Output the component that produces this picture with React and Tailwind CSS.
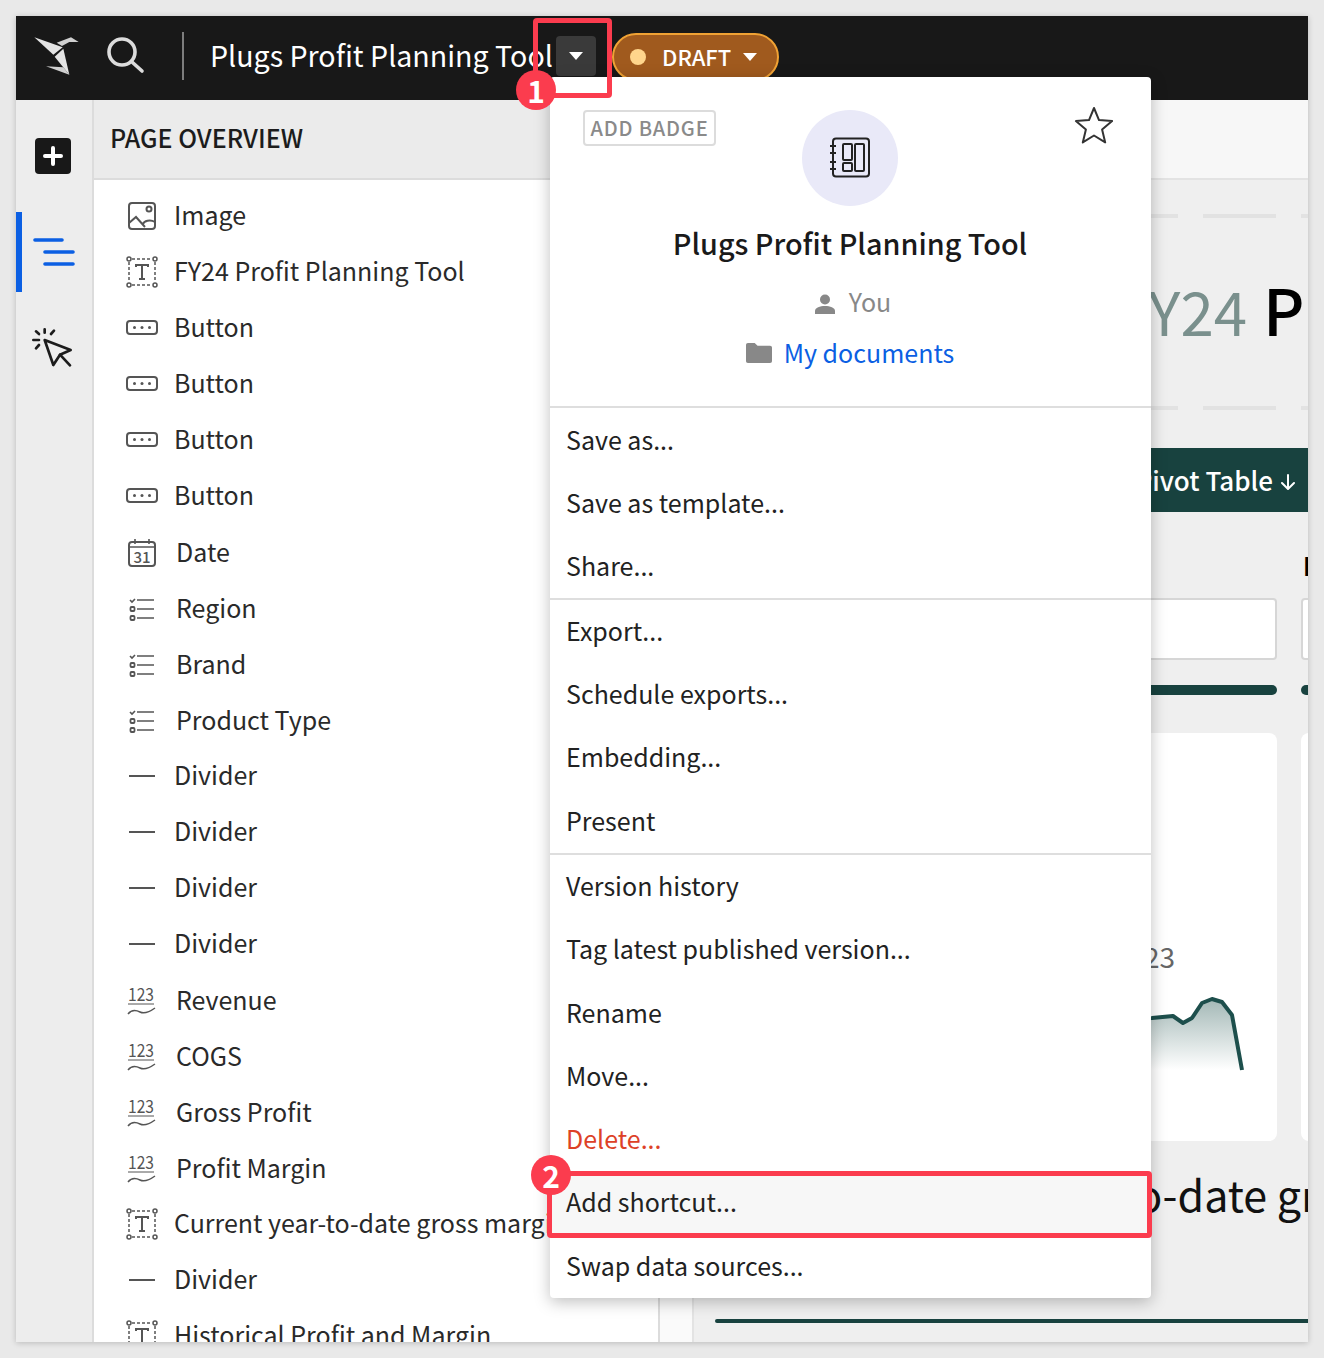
const FONT = "[font-family:'Noto_Sans_CJK_JP','Noto_Sans',sans-serif]";

function ImageIcon() {
  return (
    <svg width="28" height="28" viewBox="0 0 28 28" fill="none" stroke="#555" strokeWidth="2" className="ml-[1px]">
      <rect x="1" y="1" width="26" height="26" rx="3" />
      <circle cx="21" cy="7" r="2.5" />
      <path d="M1 21l7-6 9 10M15 22c1-3 7-5 12-2" />
    </svg>
  );
}

function TextIcon() {
  return (
    <svg width="32" height="32" viewBox="0 0 32 32" fill="none" stroke="#555" strokeWidth="1.5" className="-ml-[1px]">
      <path d="M6 3h20M6 29h20M3 6v20M29 6v20" strokeDasharray="3 2" />
      <circle cx="3" cy="3" r="2" />
      <circle cx="29" cy="3" r="2" />
      <circle cx="3" cy="29" r="2" />
      <circle cx="29" cy="29" r="2" />
      <path d="M10 11v-2h12v2M16 9v14M13 23h6" strokeWidth="2" />
    </svg>
  );
}

function ButtonIcon() {
  return (
    <svg width="34" height="18" viewBox="0 0 34 18" fill="none" stroke="#555" strokeWidth="2" className="-ml-[2px]">
      <rect x="2" y="2" width="30" height="13" rx="3" />
      <circle cx="9.5" cy="8.5" r="1.5" fill="#555" stroke="none" />
      <circle cx="17" cy="8.5" r="1.5" fill="#555" stroke="none" />
      <circle cx="24.5" cy="8.5" r="1.5" fill="#555" stroke="none" />
    </svg>
  );
}

function DateIcon() {
  return (
    <svg width="30" height="30" viewBox="0 0 30 30" fill="none" stroke="#555" strokeWidth="2">
      <rect x="2" y="4" width="26" height="24" rx="3" />
      <path d="M2 9h26M8 1v5M22 1v5" strokeWidth="1.6" />
      <text x="15" y="25" textAnchor="middle" fontSize="15" fontWeight="500" fill="#555" stroke="none" fontFamily="Noto Sans CJK JP">31</text>
    </svg>
  );
}

function ListIcon() {
  return (
    <svg width="26" height="24" viewBox="0 0 26 24" fill="none" stroke="#555" strokeWidth="1.6" className="ml-[2px]">
      <path d="M1 3l2 2 3-3M8 3h17M8 12h17M8 21h17" />
      <rect x="1.5" y="10" width="4" height="4" rx="1" strokeWidth="1.8" />
      <rect x="1.5" y="19" width="4" height="4" rx="1" strokeWidth="1.8" />
    </svg>
  );
}

function DividerIcon() {
  return (
    <svg width="28" height="4" viewBox="0 0 28 4" fill="none" stroke="#555" strokeWidth="2" className="ml-[1px]">
      <path d="M1 2h26" />
    </svg>
  );
}

function NumberIcon() {
  return (
    <svg width="30" height="28" viewBox="0 0 30 28" fill="none" stroke="#555" strokeWidth="1.5" className="overflow-visible">
      <text x="1" y="14" fontSize="18" textLength="26" lengthAdjust="spacingAndGlyphs" fill="#555" stroke="none" fontFamily="Noto Sans CJK JP">123</text>
      <path d="M1 17h26" strokeWidth="1" />
      <path d="M1 27c4-5 8-4 12-2s8 1 15-4" />
    </svg>
  );
}

const rows = [
  [ImageIcon, "Image"],
  [TextIcon, "FY24 Profit Planning Tool"],
  [ButtonIcon, "Button"],
  [ButtonIcon, "Button"],
  [ButtonIcon, "Button"],
  [ButtonIcon, "Button"],
  [DateIcon, "Date", true],
  [ListIcon, "Region", true],
  [ListIcon, "Brand", true],
  [ListIcon, "Product Type", true],
  [DividerIcon, "Divider"],
  [DividerIcon, "Divider"],
  [DividerIcon, "Divider"],
  [DividerIcon, "Divider"],
  [NumberIcon, "Revenue", true],
  [NumberIcon, "COGS", true],
  [NumberIcon, "Gross Profit", true],
  [NumberIcon, "Profit Margin", true],
  [TextIcon, "Current year-to-date gross margin"],
  [DividerIcon, "Divider"],
  [TextIcon, "Historical Profit and Margin"],
];

function Caret({ className }) {
  return (
    <svg width="14" height="8" viewBox="0 0 14 8" className={className}>
      <path d="M0 0h14L7 8z" fill="white" />
    </svg>
  );
}

function Header() {
  return (
    <div className="flex h-[84px] shrink-0 items-center bg-[#181818] pb-1 pl-[10px]">
      <svg width="64" height="56" viewBox="0 0 192 168">
        <polygon points="25,28 110,58 82,80" fill="#e4e4e4" />
        <polygon points="92,44 135,28 158,42 130,42 108,54" fill="#d0d0d0" />
        <polygon points="86,86 112,62 130,140" fill="#e4e4e4" />
        <polygon points="60,115 112,118 130,140" fill="#d0d0d0" />
      </svg>
      <svg width="38" height="38" viewBox="0 0 38 38" fill="none" stroke="#dcdcdc" strokeWidth="3.6" strokeLinecap="round" className="ml-[17px]">
        <circle cx="15" cy="15" r="13" />
        <path d="M25 25l10 9" />
      </svg>
      <div className="ml-[37px] h-12 w-0.5 bg-[#7d7d7d]" />
      <div className="ml-[26px] w-[346px] whitespace-nowrap pb-px text-[28.6px] leading-none text-white">Plugs Profit Planning Tool</div>
      <div className="flex h-10 w-10 items-center justify-center rounded bg-[#3a3a3a]">
        <Caret />
      </div>
      <div className="ml-4 mt-0.5 flex h-12 w-[167px] items-center rounded-full border-2 border-[#f0a234] bg-[#a05a1e] pl-[16px]">
        <span className="h-4 w-4 rounded-full bg-[#ffd58c]" />
        <span className="ml-4 pb-0.5 text-[22px] font-medium leading-none text-white">DRAFT</span>
        <Caret className="ml-3" />
      </div>
    </div>
  );
}

function Rail() {
  return (
    <div className="flex w-[78px] shrink-0 flex-col border-r-2 border-[#dcdcdc] bg-[#ededed]">
      <div className="ml-[19px] mt-[38px] flex h-9 w-9 items-center justify-center rounded bg-[#181818]">
        <svg width="20" height="20" viewBox="0 0 20 20" stroke="white" strokeWidth="4" strokeLinecap="round">
          <path d="M10 2v16M2 10h16" />
        </svg>
      </div>
      <div className="mt-[38px] flex h-20 border-l-[6px] border-[#0b5fe3] pl-[11px] pt-[26px]">
        <svg width="42" height="30" viewBox="0 0 42 30" stroke="#0b5fe3" strokeWidth="3.6" strokeLinecap="round">
          <path d="M2 2h27M12 14h28M12 26h28" />
        </svg>
      </div>
      <div className="ml-2 mt-7">
        <svg width="56" height="56" viewBox="0 0 168 168" fill="none" stroke="#1c1c1c" strokeWidth="8" strokeLinejoin="round" strokeLinecap="round">
          <path d="M62 60L140 90L108 104L88 135Z" />
          <path d="M108 104L138 136" />
          <path d="M62 28V38M36 34L45 42M90 32L81 42M28 60H45M36 85L45 75" />
        </svg>
      </div>
    </div>
  );
}

function Panel() {
  return (
    <div className="flex w-[566px] shrink-0 flex-col overflow-hidden border-r-2 border-[#dcdcdc] bg-white">
      <div className="flex h-20 shrink-0 items-center border-b-2 border-[#dcdcdc] bg-[#ebebeb] pb-0.5 pl-4 text-[25px] font-medium text-[#1c1c1c]">
        PAGE OVERVIEW
      </div>
      <div className="pt-2">
        {rows.map(([Icon, label, shifted], i) => (
          <div key={i} className={shifted ? "flex h-14 items-center whitespace-nowrap pl-[33px] pt-0.5 text-[25px] text-[#2a2a2a]" : "flex h-14 items-center whitespace-nowrap pl-[33px] text-[25px] text-[#2a2a2a]"}>
            <span className="flex w-[47px] shrink-0 items-center">
              <Icon />
            </span>
            <span className={shifted ? "ml-0.5 pb-0.5" : "pb-0.5"}>{label}</span>
          </div>
        ))}
      </div>
    </div>
  );
}

function Dashes({ className }) {
  return <div className={"ml-[19px] h-1 shrink-0 bg-[repeating-linear-gradient(90deg,#e2e2e2_0,#e2e2e2_73px,transparent_73px,transparent_98px)] " + className} />;
}

function Canvas() {
  return (
    <div className="flex min-w-0 flex-1 flex-col overflow-hidden bg-[#efefef]">
      <div className="h-20 shrink-0 border-b-2 border-[#e3e3e3] bg-[#f7f7f7]" />
      <Dashes className="mt-[34px]" />
      <div className="flex h-[188px] shrink-0 items-center pb-2">
        <div className="flex items-baseline whitespace-nowrap leading-none">
          <span className="w-[553px] shrink-0 text-right text-[60px] text-[#7a908d]">FY24</span>
          <span className="ml-[16px] text-[64px] font-medium text-black">Profit Planning Tool</span>
        </div>
      </div>
      <Dashes />
      <div className="ml-[21px] mt-[38px] flex h-16 shrink-0 items-center justify-end bg-[#18423f] pr-3 text-[26px] font-medium text-white">
        <span className="pb-px">Pivot Table</span>
        <svg width="16" height="16" viewBox="0 0 16 16" fill="none" stroke="white" strokeWidth="2" strokeLinecap="round" className="ml-[7px] mt-1">
          <path d="M8 1v13M2 9l6 6 6-6" />
        </svg>
      </div>
      <div className="ml-[21px] grid shrink-0 grid-cols-[562px_562px] gap-x-6">
        {["Region", "Brand"].map((label) => (
          <div key={label} className="flex flex-col">
            <div className="mt-[35px] h-9 pl-[2px] text-[25px] font-bold leading-9 text-black">{label}</div>
            <div className="mt-[15px] h-[62px] rounded border-2 border-[#d6d6d6] bg-white" />
            <div className="mt-[25px] h-2.5 rounded-full bg-[#18423f]" />
            <div className="mt-[38px] h-[408px] rounded-lg bg-white pt-[205px]">
              <div className="h-9 pr-[102px] text-right text-[28px] leading-9 text-[#666]">2023</div>
              <svg width="562" height="84" viewBox="0 0 562 84" className="mt-4">
                <defs>
                  <linearGradient id={"fade" + label} x1="0" y1="0" x2="0" y2="1">
                    <stop offset="0" stopColor="#a3b8b6" />
                    <stop offset="1" stopColor="#ffffff" />
                  </linearGradient>
                </defs>
                <path d="M300 35L400 30L437 28L458 26L468 33L477 28L487 13L497 9L507 12L517 25L527 80L300 80Z" fill={"url(#fade" + label + ")"} />
                <path d="M300 35L400 30L437 28L458 26L468 33L477 28L487 13L497 9L507 12L517 25L527 80" fill="none" stroke="#1d4f4c" strokeWidth="4" strokeLinejoin="round" />
              </svg>
            </div>
          </div>
        ))}
      </div>
      <div className="ml-[166px] mt-4 flex h-[72px] shrink-0 items-center whitespace-nowrap text-[43px] leading-none text-[#111]">
        Current year-to-date gross margin
      </div>
      <div className="ml-[21px] mt-[90px] h-1 shrink-0 rounded-l-full bg-[#18423f]" />
    </div>
  );
}

const menuGroups = [
  ["Save as...", "Save as template...", "Share..."],
  ["Export...", "Schedule exports...", "Embedding...", "Present"],
  ["Version history", "Tag latest published version...", "Rename", "Move...", "Delete...", "Add shortcut...", "Swap data sources..."],
];

function MenuItem({ label, first }) {
  let tone = "text-[#222]";
  if (label === "Delete...") tone = "text-[#dd4127]";
  return (
    <div className={`flex h-[63.3px] items-center pl-4 text-[25px] ${first ? "" : "pb-0.5"} ${tone} ${label === "Add shortcut..." ? "bg-[#f7f7f7]" : ""}`}>
      {label}
    </div>
  );
}

function Menu() {
  return (
    <div className="absolute left-[550px] top-[77px] w-[601px] rounded bg-white shadow-[0_4px_16px_rgba(0,0,0,0.25)]">
      <div className="relative flex h-[329px] flex-col items-center pr-px pt-[33px]">
        <div className="absolute left-[33px] top-[33px] flex h-9 w-[133px] items-center justify-center whitespace-nowrap rounded-sm border-2 border-[#dcdcdc] text-[20px] font-medium tracking-[0.8px] text-[#8a8a8a]">
          ADD BADGE
        </div>
        <svg width="40" height="40" viewBox="0 0 40 40" fill="none" stroke="#333" strokeWidth="2" strokeLinejoin="round" className="absolute left-[524px] top-[29px]">
          <polygon points="20,2 25,14.1 38.1,15.1 28.1,23.6 31.2,36.4 20,29.5 8.8,36.4 11.9,23.6 1.9,15.1 15,14.1" />
        </svg>
        <div className="flex h-24 w-24 items-center justify-center rounded-full bg-[#e9e9f8]">
          <svg width="42" height="42" viewBox="0 0 42 42" fill="none" stroke="#222" strokeWidth="2">
            <rect x="4" y="1.5" width="36" height="38" rx="3" />
            <path d="M1 9h6M1 16h6M1 25h6M1 32h6" />
            <rect x="14" y="7" width="9" height="16" rx="1" />
            <rect x="14" y="26" width="9" height="8" rx="1" />
            <rect x="26" y="7" width="9" height="27" rx="1" />
          </svg>
        </div>
        <div className="mt-[15px] text-[28.8px] font-medium leading-[44px] text-[#1a1a1a]">Plugs Profit Planning Tool</div>
        <div className="mt-[21px] flex h-9 items-center pl-1.5 text-[25px] text-[#888]">
          <svg width="20" height="20" viewBox="0 0 20 20" fill="#888" className="mr-[14px]">
            <circle cx="10" cy="5.5" r="5" />
            <path d="M0 20v-3c0-3.5 5-5 10-5s10 1.5 10 5v3z" />
          </svg>
          <span className="pb-1">You</span>
        </div>
        <div className="mt-[15px] flex h-9 items-center text-[25px] text-[#0b5fe3]">
          <svg width="26" height="20" viewBox="0 0 27 22" fill="#888" preserveAspectRatio="none" className="mr-3 mb-1">
            <path d="M0 2a2 2 0 0 1 2-2h7l3 3h13a2 2 0 0 1 2 2v15a2 2 0 0 1-2 2H2a2 2 0 0 1-2-2z" />
          </svg>
          <span className="pb-1">My documents</span>
        </div>
      </div>
      {menuGroups.map((group, i) => (
        <div key={i} className="border-t-2 border-[#dedede]">
          {group.map((label) => (
            <MenuItem key={label} label={label} first={i === 0} />
          ))}
        </div>
      ))}
    </div>
  );
}

export default function App() {
  return (
    <div className={`relative h-[1358px] w-[1324px] overflow-hidden bg-[#e9e9e9] p-4 ${FONT}`}>
      <div className="flex h-[1326px] w-[1292px] flex-col overflow-hidden shadow-[0_1px_6px_rgba(0,0,0,0.2)]">
        <Header />
        <div className="flex min-h-0 flex-1">
          <Rail />
          <Panel />
          <div className="w-[34px] shrink-0 border-r-2 border-[#e3e3e3] bg-[#fafafa]" />
          <Canvas />
        </div>
      </div>
      <Menu />
      <div className="absolute left-[533px] top-[18px] h-[80px] w-[79px] rounded-sm border-[5px] border-[#fb3c4e]" />
      <div className="absolute left-[547px] top-[1171px] h-[67px] w-[605px] rounded-sm border-[5px] border-[#fb3c4e]" />
      <div className="absolute left-[516px] top-[70px] flex h-10 w-10 items-center justify-center rounded-full bg-[#fb3c4e] text-[30px] font-bold leading-none text-white">1</div>
      <div className="absolute left-[531px] top-[1155px] flex h-10 w-10 items-center justify-center rounded-full bg-[#fb3c4e] text-[30px] font-bold leading-none text-white">2</div>
    </div>
  );
}
